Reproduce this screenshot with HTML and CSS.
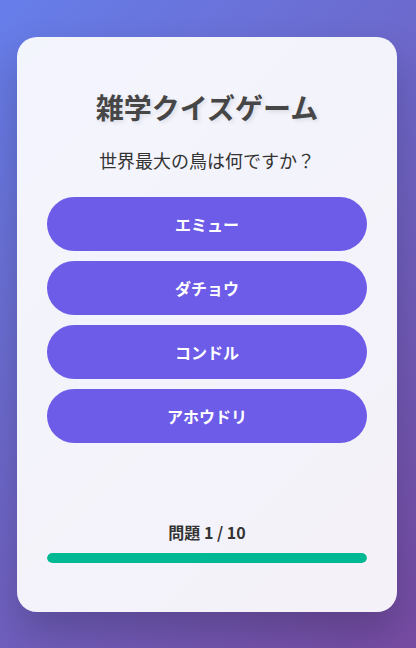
FILE: index.html
```html
<!DOCTYPE html>
<html lang="ja">

<head>
    <meta charset="UTF-8">
    <meta name="viewport" content="width=device-width, initial-scale=1">
    <title>雑学クイズゲーム</title>
    <link rel="stylesheet" href="styles.css">
</head>

<body>

    <!-- クイズカード -->
    <div class="quiz-card">
        <h1>雑学クイズゲーム</h1>
        <p class="question">世界最大の鳥は何ですか？</p>

        <div class="options">
            <button class="option">エミュー</button>
            <button class="option">ダチョウ</button>
            <button class="option">コンドル</button>
            <button class="option">アホウドリ</button>
        </div>

        <div class="progress">
            <p class="progress-text">問題 1 / 10</p>
            <div class="progress-bar">
                <div class="progress-fill"></div>
            </div>
        </div>
    </div>

</body>

</html>
```

FILE: styles.css
```css
body {
    font-family: "Noto Sans CJK JP", "Noto Sans", sans-serif;
    background: linear-gradient(135deg, #667eea 0%, #764ba2 100%);
    margin: 0;
    padding: 0 19px 0 17px;
    min-height: 100vh;
    display: flex;
    align-items: center;
    justify-content: center;
}

.quiz-card {
    width: 100%;
    max-width: 380px;
    height: 575px;
    box-sizing: border-box;
    padding: 53px 30px 49px;
    background: rgba(255, 255, 255, 0.92);
    border-radius: 20px;
    box-shadow: 0 20px 40px rgba(0, 0, 0, 0.2);
    display: flex;
    flex-direction: column;
}

h1 {
    margin: 0;
    font-size: 28px;
    line-height: 34px;
    text-align: center;
    color: #464646;
    text-shadow: 2px 2px 4px rgba(0, 0, 0, 0.1);
}

.question {
    margin: 23px 0 0;
    font-size: 18px;
    line-height: 26px;
    text-align: center;
    color: #333;
}

.options {
    margin-top: 24px;
    display: flex;
    flex-direction: column;
    gap: 10px;
}

.option {
    font-family: inherit;
    background-color: #6c5ce7;
    color: white;
    padding: 15px;
    border: none;
    border-radius: 30px;
    font-size: 16px;
    font-weight: bold;
    line-height: 24px;
    cursor: pointer;
    width: 100%;
}

.option:hover {
    background-color: #5b4bd5;
}

.progress {
    margin-top: auto;
}

.progress-text {
    margin: 0 0 9px;
    font-size: 16px;
    font-weight: bold;
    line-height: 24px;
    text-align: center;
    color: #333;
}

.progress-bar {
    height: 10px;
    background-color: #dfe6e9;
    border-radius: 5px;
    overflow: hidden;
}

.progress-fill {
    height: 100%;
    background-color: #00b894;
    border-radius: 5px;
}
```
